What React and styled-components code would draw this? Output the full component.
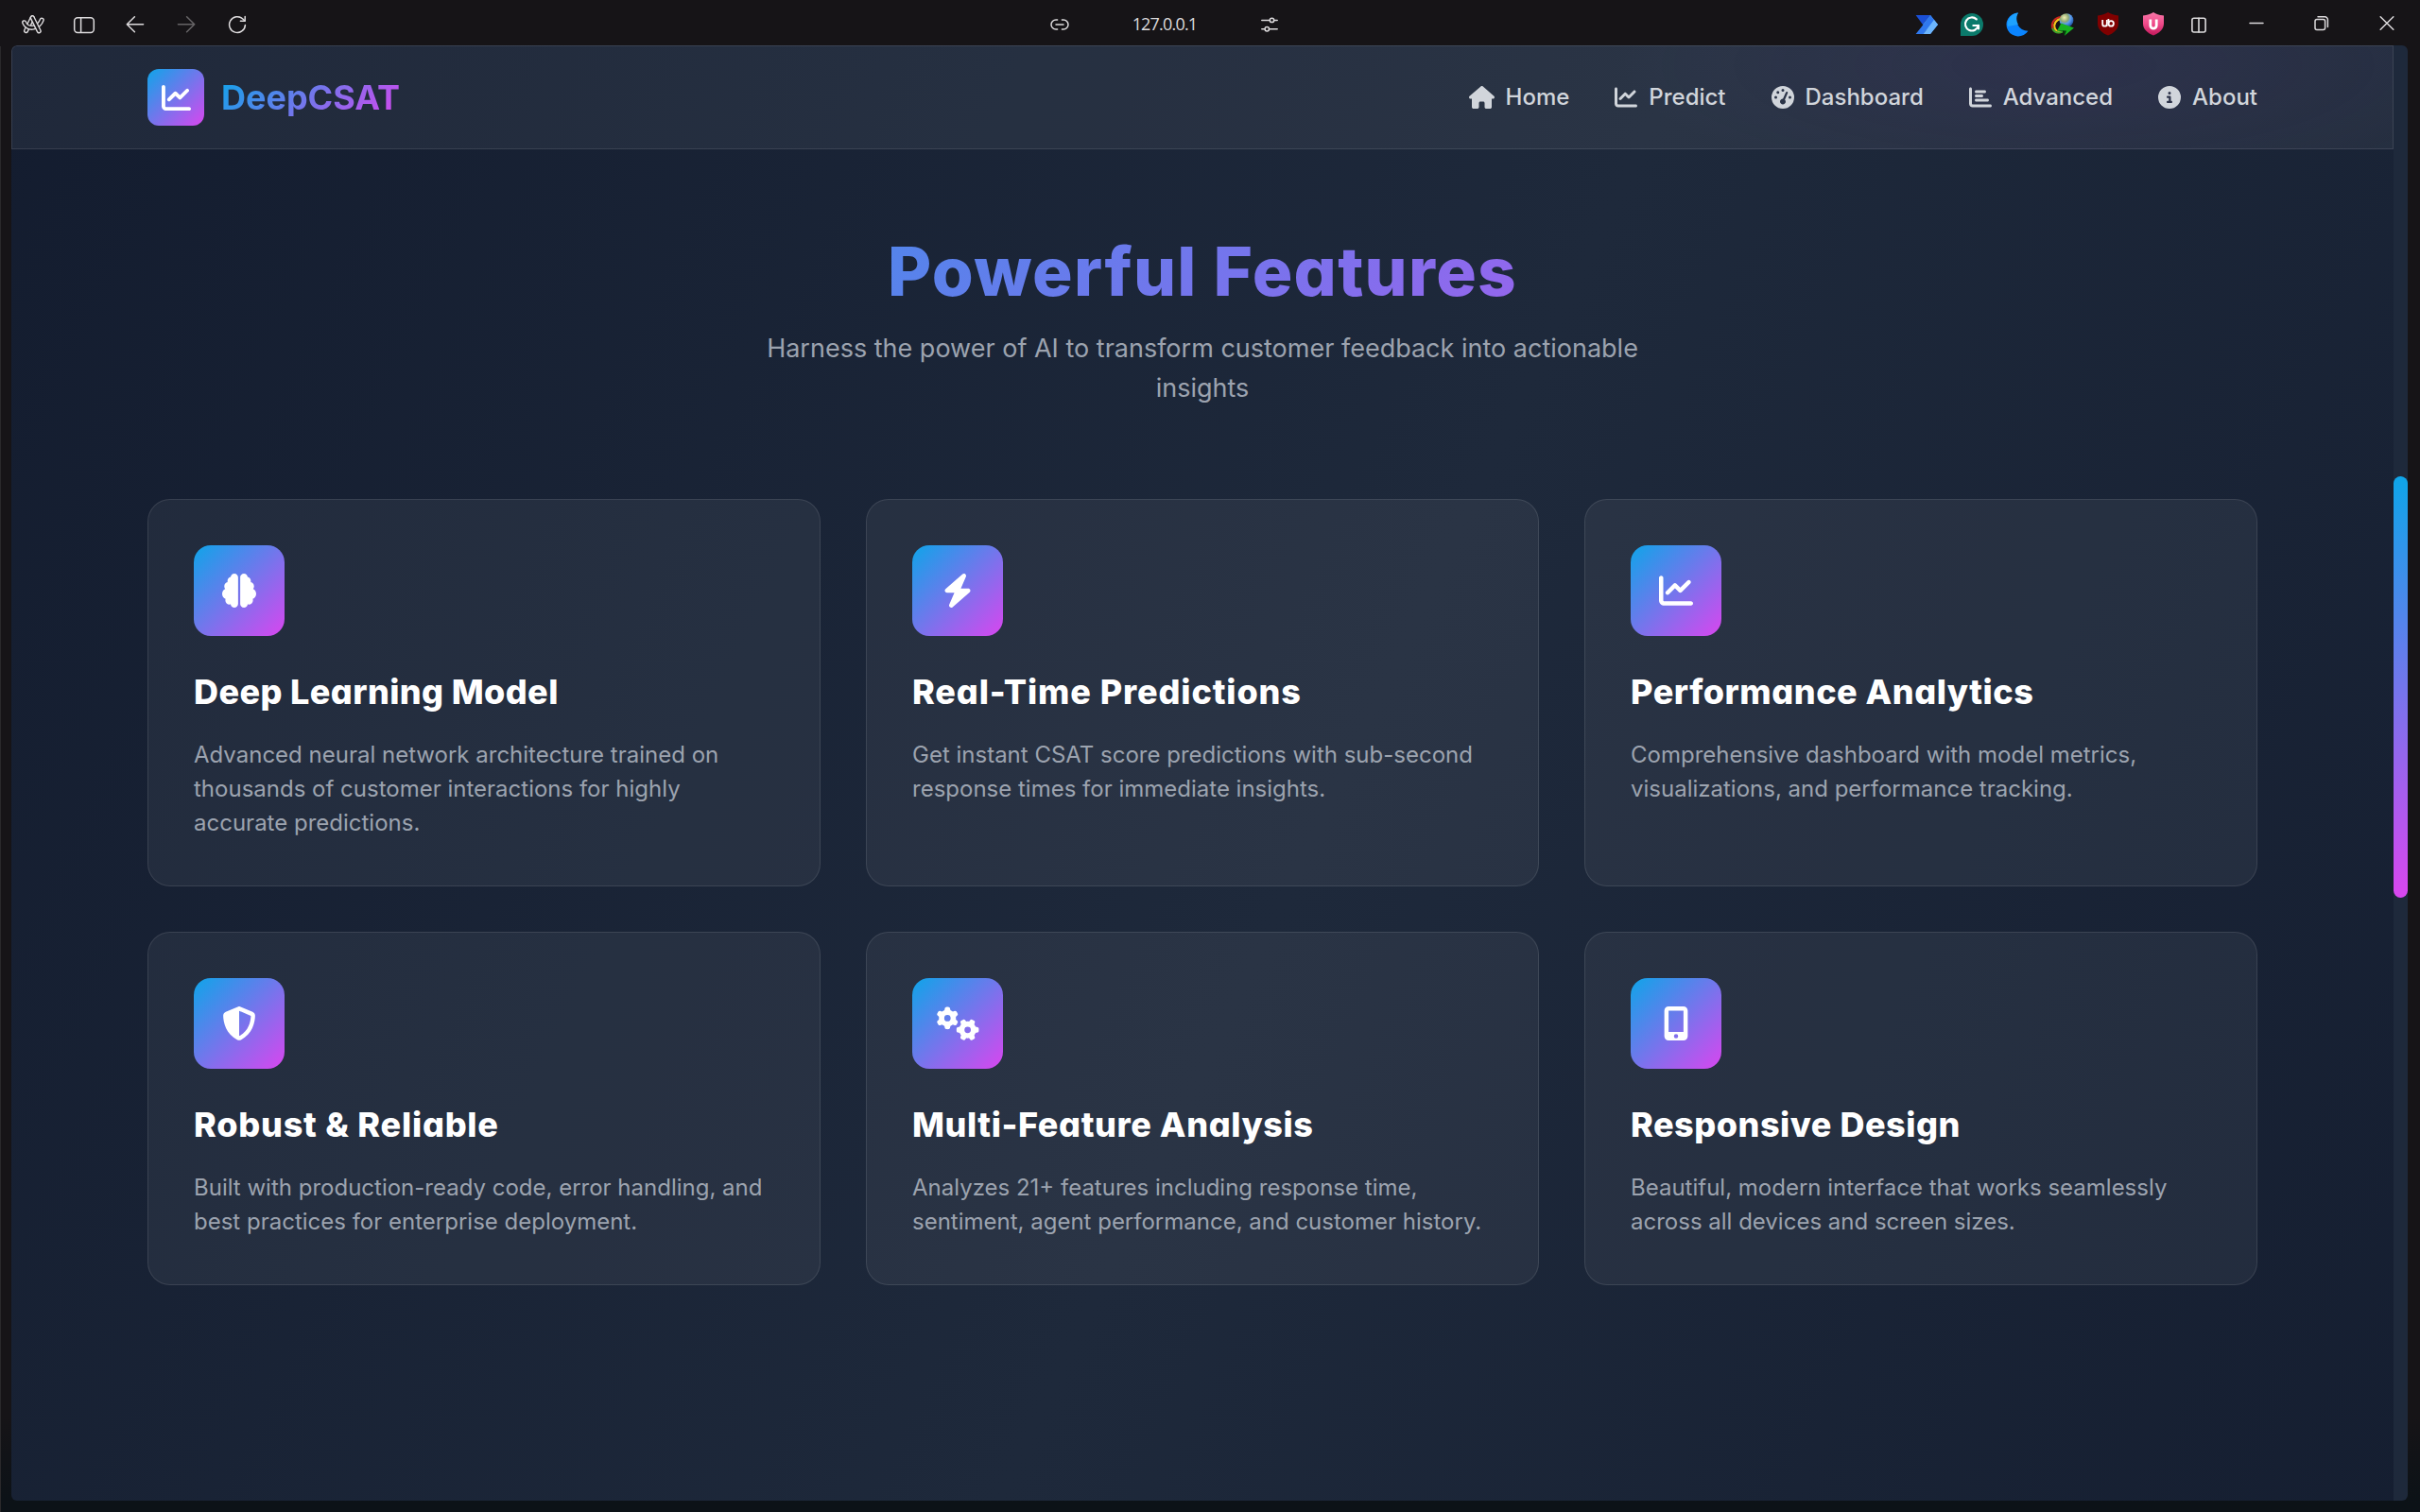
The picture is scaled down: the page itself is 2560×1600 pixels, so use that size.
import React from "react";
import styled, { createGlobalStyle } from "styled-components";
import {
  FaHouse,
  FaChartLine,
  FaGaugeHigh,
  FaChartBar,
  FaCircleInfo,
  FaBrain,
  FaBolt,
  FaShieldHalved,
  FaGears,
  FaMobileScreenButton,
} from "react-icons/fa6";

const brandGradient = "linear-gradient(135deg, #0ea5e9, #d946ef)";

const GlobalStyle = createGlobalStyle`
  *, *::before, *::after { box-sizing: border-box; }
  html, body { margin: 0; padding: 0; background: #161417; }
  body { font-family: Inter, "Liberation Sans", sans-serif; }
  h1, h2, h3, p { margin: 0; }
`;

const Window = styled.div`
  width: 2560px;
  height: 1600px;
  display: flex;
  flex-direction: column;
  overflow: hidden;
  background:
    linear-gradient(#2a292b, #2a292b) 0 49px / 1px 1551px no-repeat,
    linear-gradient(180deg, #161417 0, #161417 1500px, #0c1217 1590px);
`;

/* ---------- browser chrome ---------- */

const TitleBar = styled.header`
  flex: none;
  height: 48px;
  display: grid;
  grid-template-columns: 1094px 276px 1fr;
  color: #dddbdd;
`;

const BarGroup = styled.div`
  display: flex;
  padding-left: ${(p) => p.$start || 0}px;
  padding-right: ${(p) => p.$end || 0}px;
  justify-content: ${(p) => p.$justify || "flex-start"};
`;

const BarButton = styled.div`
  width: ${(p) => p.$w}px;
  height: 51px;
  display: flex;
  align-items: center;
  justify-content: center;
  opacity: ${(p) => (p.$dim ? 0.4 : 1)};

  svg { display: block; overflow: visible; }
`;

const ControlGroup = styled.div`
  display: flex;
  height: 50px;
  padding-left: 2px;
`;

const Address = styled.div`
  flex: 1;
  text-align: center;
  font: 400 18px/50px "Open Sans", "Noto Sans", sans-serif;
  letter-spacing: -0.8px;
  color: #dddbdd;
`;

const Line = ({ size = 24, width = 1.5, children }) => (
  <svg
    width={size}
    height={size}
    viewBox="0 0 24 24"
    fill="none"
    stroke="currentColor"
    strokeWidth={width}
    strokeLinecap="round"
    strokeLinejoin="round"
  >
    {children}
  </svg>
);

/* Each ribbon is a light stroke with a dark core, stacked so that they weave. */
const ribbons = [
  "M4.6 18.6L11.2 4.8",
  "M2.7 9.8C4.2 14.2 8.6 16 12.6 15C17 13.8 20 10.6 21.2 7.2",
  "M11.3 4.8L18.2 18.8",
];

const ArcIcon = () => (
  <Line>
    {ribbons.map((d) => (
      <g key={d}>
        <path d={d} strokeWidth="5.2" />
        <path d={d} strokeWidth="2.4" stroke="#161417" />
      </g>
    ))}
  </Line>
);

const SidebarIcon = () => (
  <Line>
    <rect x="1.7" y="4.8" width="20.6" height="15.6" rx="3.4" />
    <path d="M8.6 5V20.2" />
  </Line>
);

const BackIcon = () => (
  <Line>
    <path d="M20.6 11.8H3.4M11.4 3.8L3.3 11.8L11.4 19.8" />
  </Line>
);

const ForwardIcon = () => (
  <Line>
    <path d="M3.4 11.8H20.6M12.6 3.8L20.7 11.8L12.6 19.8" />
  </Line>
);

const ReloadIcon = () => (
  <Line>
    <path d="M20.4 12.6A8.4 8.4 0 1 1 17.8 6L20 8" />
    <path d="M20.2 3.6V8.2H15.4" />
  </Line>
);

const LinkIcon = () => (
  <Line>
    <path d="M9.6 7H8A5 5 0 0 0 8 17H9.6M14.4 7H16A5 5 0 0 1 16 17H14.4M8 12H16" />
  </Line>
);

const TuneIcon = () => (
  <Line>
    <path d="M3.8 7.4H12.2M16.8 7.4H20.2M3.8 16.8H7M11.6 16.8H20.2" />
    <circle cx="14.5" cy="7.4" r="2.2" />
    <circle cx="9.3" cy="16.8" r="2.2" />
  </Line>
);

const FlowIcon = () => (
  <svg width="24" height="22" viewBox="0 0 24 22">
    <path d="M.6 1H16L8 11Z" fill="#1a4fd6" />
    <path d="M16 1L24 11L16 21L8 11Z" fill="#4f9df8" />
    <path d="M16 1L8.6 11L.6 21H9L20 6Z" fill="#2f78ee" />
    <path d="M20 6L24 11L16 21H8.6Z" fill="#6db5fc" />
  </svg>
);

const GrammarIcon = () => (
  <svg width="24" height="24" viewBox="0 0 24 24">
    <path d="M12 0A12 12 0 1 1 12 24H0V12A12 12 0 0 1 12 0Z" fill="#0b7a6b" />
    <path
      d="M16.8 6.4A7 7 0 1 0 18.8 13H13.4M19 12.8V16.4"
      fill="none"
      stroke="#fff"
      strokeWidth="2.2"
      strokeLinecap="round"
      strokeLinejoin="round"
    />
  </svg>
);

const MoonIcon = () => (
  <svg width="23" height="26" viewBox="0 0 24 26">
    <path d="M12.4 0A13 13 0 1 0 23.4 20A13 13 0 0 1 12.4 0Z" fill="#0a84ff" />
    <path d="M12.4 0A13 13 0 0 0 .8 15L12.4 13A14 14 0 0 1 12.4 0Z" fill="#1ea2ff" />
  </svg>
);

const GlobeIcon = () => (
  <svg width="24" height="24" viewBox="0 0 24 24">
    <defs>
      <radialGradient id="globe" cx=".35" cy=".3" r=".75">
        <stop offset="0" stopColor="#f1efb0" />
        <stop offset=".4" stopColor="#8ea874" />
        <stop offset=".6" stopColor="#5c9df0" />
        <stop offset="1" stopColor="#174c9c" />
      </radialGradient>
    </defs>
    <path d="M10 4C3 5 0 10 1 15C2 19 6 21 10 20" fill="none" stroke="#c8261e" strokeWidth="2" />
    <path d="M10 6C5 7 2.6 11 3.6 15C4.6 18 7 19.4 10 19" fill="none" stroke="#f5c61a" strokeWidth="2.4" />
    <path d="M10 8.4C6.6 9.6 5 12.4 5.8 15C6.6 17 8 18 11 17.6" fill="none" stroke="#161417" strokeWidth="2.4" />
    <path d="M1 16C3 20 7 21.4 12 19.6" fill="none" stroke="#3aa52a" strokeWidth="1.8" />
    <circle cx="16" cy="7.6" r="7.4" fill="url(#globe)" />
    <path d="M10.4 10.4L24 15.6L14 23.8L13.6 18.6L6 18.8Z" fill="#18b321" />
    <path d="M12 18.6L14 23.8L16 18.4Z" fill="#063d0b" />
  </svg>
);

const shield = "M12 0C15 2 18.6 3.2 23 3.4V12C23 18 18 22 12 24.6C6 22 1 18 1 12V3.4C5.4 3.2 9 2 12 0Z";

const BlockerIcon = () => (
  <svg width="24" height="25" viewBox="0 0 24 25">
    <path d={shield} fill="#800000" />
    <path
      d="M6.2 8V12.4A2.3 2.3 0 0 0 10.8 12.4V8M10.8 12.6V14.8"
      fill="none"
      stroke="#fff"
      strokeWidth="1.8"
    />
    <circle cx="15.2" cy="11.9" r="2.7" fill="none" stroke="#fff" strokeWidth="1.8" />
    <path d="M12.4 7V12" stroke="#fff" strokeWidth="1.8" />
  </svg>
);

const UShieldIcon = () => (
  <svg width="22" height="25" viewBox="1 0 22 25">
    <defs>
      <linearGradient id="pink" x1="0" y1="0" x2="0" y2="1">
        <stop offset="0" stopColor="#f878a8" />
        <stop offset=".5" stopColor="#f04a8a" />
        <stop offset="1" stopColor="#c2185b" />
      </linearGradient>
    </defs>
    <path d={shield} fill="url(#pink)" />
    <path d="M8.8 7.4V14A3.2 3.2 0 0 0 15.2 14V7.4" fill="none" stroke="#fff" strokeWidth="2.8" />
  </svg>
);

const SplitIcon = () => (
  <Line width={1.6}>
    <rect x="4.9" y="5.2" width="14.2" height="14.8" rx="2" />
    <path d="M12 5.2V20" />
  </Line>
);

const MinimizeIcon = () => (
  <Line>
    <path d="M5 10.4H19" />
  </Line>
);

const RestoreIcon = () => (
  <Line>
    <rect x="5" y="6.6" width="10.6" height="11" rx="2" />
    <path d="M8 3.8H15.4A3 3 0 0 1 18.4 6.8V14.4" />
  </Line>
);

const CloseIcon = () => (
  <Line>
    <path d="M5.2 3.8L18.8 17.2M18.8 3.8L5.2 17.2" />
  </Line>
);

/* ---------- page ---------- */

const Viewport = styled.div`
  flex: none;
  display: flex;
  height: 1540px;
  margin: 0 13px 0 12px;
  border-radius: 6px;
  overflow: hidden;
`;

/* Shows one slice of the gradient that spans the full scrolled document. */
const Page = styled.div`
  flex: 1;
  display: flex;
  flex-direction: column;
  background: linear-gradient(to bottom right, #0f172a, #1e293b, #0f172a) 0 -1574px / 2520px 5317px no-repeat;
`;

const ScrollTrack = styled.div`
  flex: none;
  width: 15px;
  padding-top: 456px;
  background: #1e293b;
`;

const ScrollThumb = styled.div`
  height: 446px;
  border-radius: 7.5px;
  background: linear-gradient(180deg, #0ea5e9, #d946ef);
`;

const NavBar = styled.nav`
  flex: none;
  height: 110px;
  padding: 0 143px;
  display: flex;
  align-items: center;
  justify-content: space-between;
  border: 1px solid rgba(255, 255, 255, 0.1);
  border-top-left-radius: 6px;
  background: radial-gradient(ellipse 460px 130px at 2160px 20px, rgba(80, 50, 130, 0.14), transparent),
    rgba(255, 255, 255, 0.055);
`;

const Brand = styled.div`
  display: flex;
  align-items: center;
  gap: 18px;
`;

const IconTile = styled.div`
  width: ${(p) => p.$size}px;
  height: ${(p) => p.$size}px;
  border-radius: ${(p) => p.$radius}px;
  display: flex;
  align-items: center;
  justify-content: center;
  color: #fff;
  background: ${brandGradient};

  svg {
    flex: none;
    width: ${(p) => p.$glyphWidth || p.$glyph}px;
    height: ${(p) => p.$glyph}px;
  }
`;

const BrandName = styled.span`
  font-size: 36px;
  line-height: 48px;
  font-weight: 700;
  color: transparent;
  background: ${brandGradient};
  background-clip: text;
  -webkit-background-clip: text;
`;

const NavLinks = styled.div`
  display: flex;
  gap: 48px;
`;

const NavLink = styled.a`
  display: flex;
  align-items: center;
  gap: 12px;
  font-size: 24px;
  line-height: 36px;
  font-weight: 500;
  color: #d1d5db;

  svg {
    flex: none;
    width: ${(p) => p.$glyphWidth || 24}px;
    height: 24px;
  }
`;

const Section = styled.main`
  padding: 93px 144px 0;
  display: flex;
  flex-direction: column;
`;

const Heading = styled.h1`
  text-align: center;
  font-size: 71px;
  line-height: 72px;
  font-weight: 800;
  letter-spacing: 1.3px;
  font-feature-settings: "cv11";
  color: transparent;
  background: ${brandGradient};
  background-clip: text;
  -webkit-background-clip: text;
`;

const Subtitle = styled.p`
  width: 1008px;
  margin: 25px auto 96px;
  text-align: center;
  font-size: 27px;
  line-height: 42px;
  color: #9ca3af;
`;

const CardGrid = styled.div`
  display: grid;
  grid-template-columns: repeat(3, 1fr);
  gap: 48px;
`;

const Card = styled.article`
  padding: 48px;
  border: 1px solid rgba(255, 255, 255, 0.1);
  border-radius: 24px;
  background: rgba(255, 255, 255, 0.055);
`;

const CardTitle = styled.h3`
  margin: 35px 0 25px;
  font-size: 36px;
  line-height: 48px;
  font-weight: 800;
  letter-spacing: ${(p) => p.$track}px;
  font-feature-settings: "cv11";
  white-space: nowrap;
  color: #fff;
`;

const CardText = styled.p`
  font-size: 24px;
  line-height: 36px;
  color: #9ca3af;
`;

const navItems = [
  { label: "Home", Icon: FaHouse, glyphWidth: 27 },
  { label: "Predict", Icon: FaChartLine },
  { label: "Dashboard", Icon: FaGaugeHigh },
  { label: "Advanced", Icon: FaChartBar },
  { label: "About", Icon: FaCircleInfo },
];

const features = [
  {
    Icon: FaBrain,
    title: "Deep Learning Model",
    track: 0.4,
    text: "Advanced neural network architecture trained on thousands of customer interactions for highly accurate predictions.",
  },
  {
    Icon: FaBolt,
    title: "Real-Time Predictions",
    track: 0.88,
    text: "Get instant CSAT score predictions with sub-second response times for immediate insights.",
  },
  {
    Icon: FaChartLine,
    title: "Performance Analytics",
    track: 0.52,
    text: "Comprehensive dashboard with model metrics, visualizations, and performance tracking.",
  },
  {
    Icon: FaShieldHalved,
    title: "Robust & Reliable",
    track: 0.78,
    text: "Built with production-ready code, error handling, and best practices for enterprise deployment.",
  },
  {
    Icon: FaGears,
    glyphWidth: 45,
    title: "Multi-Feature Analysis",
    track: 0.6,
    text: "Analyzes 21+ features including response time, sentiment, agent performance, and customer history.",
  },
  {
    Icon: FaMobileScreenButton,
    title: "Responsive Design",
    track: 0.52,
    text: "Beautiful, modern interface that works seamlessly across all devices and screen sizes.",
  },
];

const tools = [ArcIcon, SidebarIcon, BackIcon, ForwardIcon, ReloadIcon];
const extensions = [FlowIcon, GrammarIcon, MoonIcon, GlobeIcon, BlockerIcon, UShieldIcon, SplitIcon];
const windowControls = [MinimizeIcon, RestoreIcon, CloseIcon];

export default function App() {
  return (
    <Window>
      <GlobalStyle />
      <TitleBar>
        <BarGroup $start={8}>
          {tools.map((Icon, i) => (
            <BarButton key={i} $w={54} $dim={Icon === ForwardIcon}>
              <Icon />
            </BarButton>
          ))}
        </BarGroup>
        <BarGroup>
          <BarButton $w={54}>
            <LinkIcon />
          </BarButton>
          <Address>127.0.0.1</Address>
          <BarButton $w={54}>
            <TuneIcon />
          </BarButton>
        </BarGroup>
        <BarGroup $justify="flex-end" $end={1}>
          {extensions.map((Icon, i) => (
            <BarButton key={i} $w={48}>
              <Icon />
            </BarButton>
          ))}
          <ControlGroup>
            {windowControls.map((Icon, i) => (
              <BarButton key={i} $w={69}>
                <Icon />
              </BarButton>
            ))}
          </ControlGroup>
        </BarGroup>
      </TitleBar>

      <Viewport>
        <Page>
          <NavBar>
            <Brand>
              <IconTile $size={60} $radius={12} $glyph={31}>
                <FaChartLine />
              </IconTile>
              <BrandName>DeepCSAT</BrandName>
            </Brand>
            <NavLinks>
              {navItems.map(({ label, Icon, glyphWidth }) => (
                <NavLink key={label} $glyphWidth={glyphWidth}>
                  <Icon />
                  {label}
                </NavLink>
              ))}
            </NavLinks>
          </NavBar>

          <Section>
            <Heading>Powerful Features</Heading>
            <Subtitle>Harness the power of AI to transform customer feedback into actionable insights</Subtitle>
            <CardGrid>
              {features.map(({ Icon, title, track, text, glyphWidth }) => (
                <Card key={title}>
                  <IconTile $size={96} $radius={18} $glyph={36} $glyphWidth={glyphWidth}>
                    <Icon />
                  </IconTile>
                  <CardTitle $track={track}>{title}</CardTitle>
                  <CardText>{text}</CardText>
                </Card>
              ))}
            </CardGrid>
          </Section>
        </Page>
        <ScrollTrack>
          <ScrollThumb />
        </ScrollTrack>
      </Viewport>
    </Window>
  );
}
